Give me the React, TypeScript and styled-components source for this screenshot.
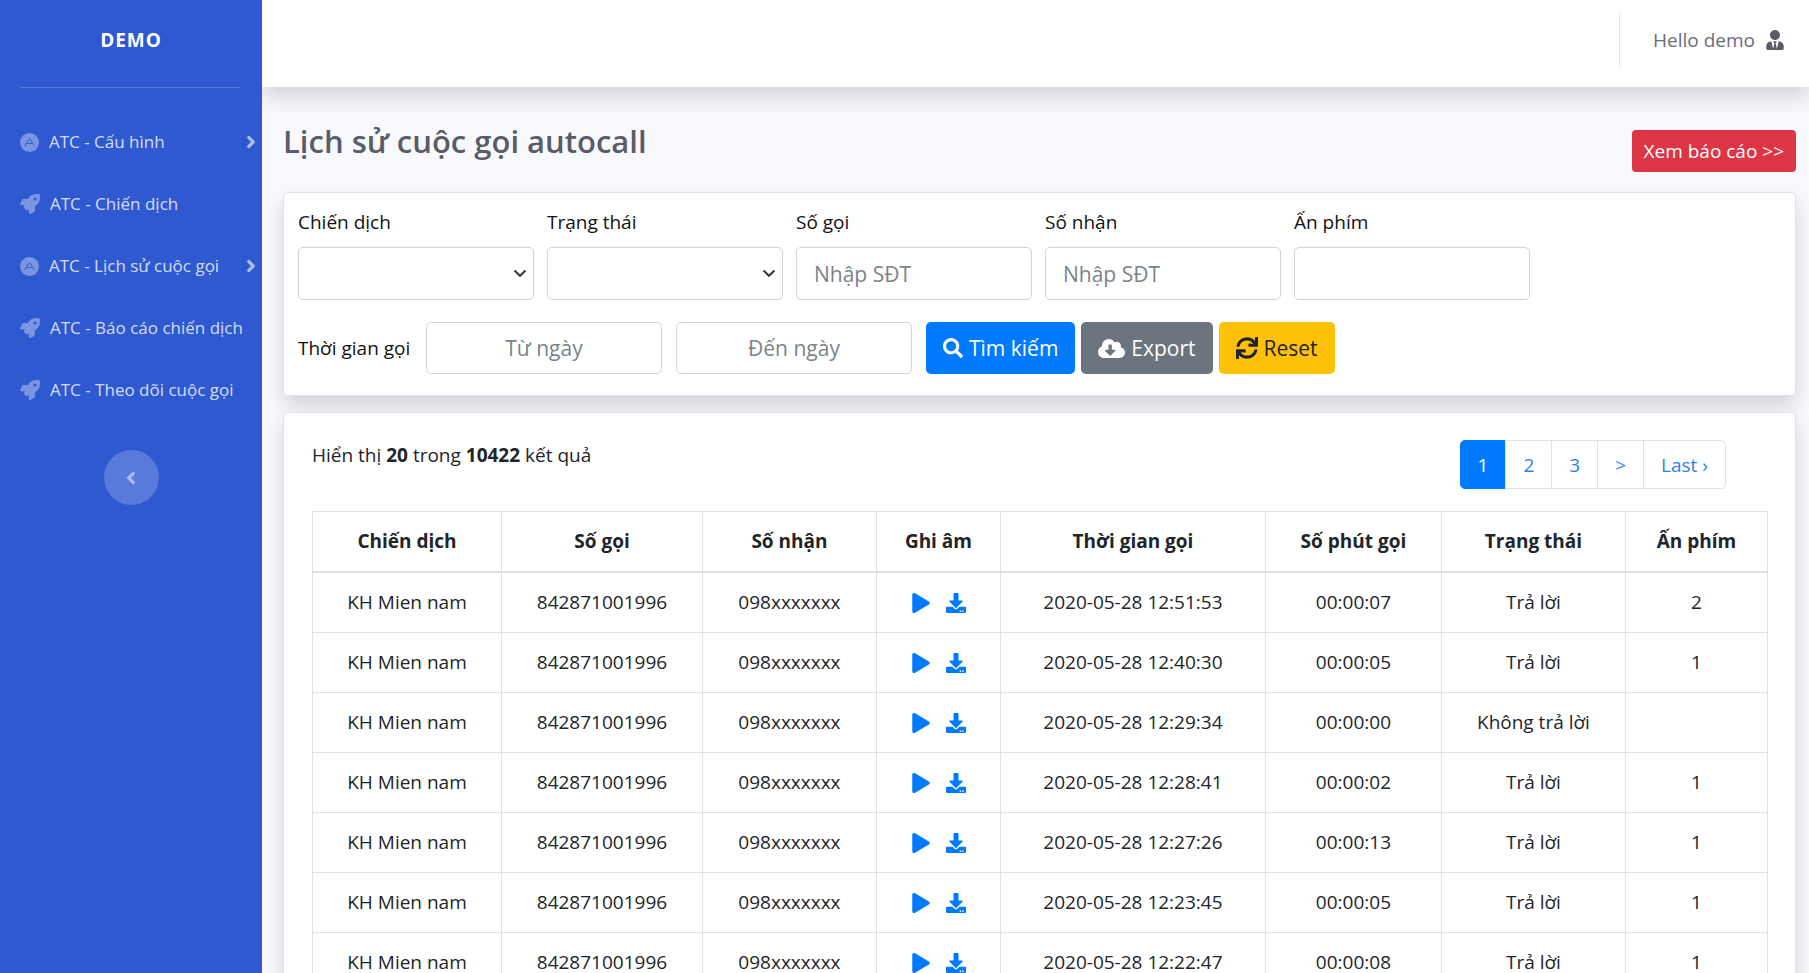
import React from 'react';
import styled, { createGlobalStyle, css } from 'styled-components';
import {
  FaRocket, FaAngleRight, FaAngleLeft, FaUserTie, FaSearch, FaCloudDownloadAlt, FaSync, FaPlay, FaDownload,
} from 'react-icons/fa';

const Global = createGlobalStyle`
  *, *::before, *::after { box-sizing: border-box; }
  html { scrollbar-width: none; }
  body {
    margin: 0;
    background: #f8f9fc;
    color: #212529;
    font-family: "Open Sans", "Noto Sans", sans-serif;
    font-size: 19px;
    line-height: 30px;
  }
  button, input, select { font: inherit; margin: 0; }
`;

const Shell = styled.div`
  display: flex;
  min-height: 100vh;
`;

const Sidebar = styled.nav`
  position: relative;
  z-index: 1;
  flex: 0 0 262px;
  background: #2f59d1;
  display: flex;
  flex-direction: column;
`;

const Brand = styled.a`
  height: 87px;
  padding-bottom: 7px;
  display: flex;
  align-items: center;
  justify-content: center;
  color: #fff;
  font-weight: 700;
  font-size: 19px;
  letter-spacing: 1px;
  text-decoration: none;
`;

const Divider = styled.hr`
  width: 220px;
  margin: 0 0 23px 20px;
  border: 0;
  border-top: 1px solid rgba(255, 255, 255, 0.18);
`;

const NavList = styled.ul`
  list-style: none;
  margin: 0;
  padding: 0;
`;

const NavLink = styled.a`
  display: flex;
  align-items: center;
  height: 62px;
  padding: 0 1px 0 20px;
  color: rgba(255, 255, 255, 0.8);
  font-size: 17px;
  text-decoration: none;
  white-space: nowrap;

  > svg { color: rgba(255, 255, 255, 0.36); flex: none; }
  > span { margin-left: 10px; flex: 1; }
  > span + svg { color: rgba(255, 255, 255, 0.6); }
`;

const Collapse = styled.button`
  align-self: center;
  width: 55px;
  height: 55px;
  padding: 0;
  margin-top: 29px;
  border: 0;
  border-radius: 50%;
  background: rgba(255, 255, 255, 0.2);
  color: rgba(255, 255, 255, 0.5);
  display: flex;
  align-items: center;
  justify-content: center;
`;

const Main = styled.main`
  flex: 1;
  min-width: 0;
`;

const Topbar = styled.header`
  height: 87px;
  padding: 0 24px 7px 0;
  background: #fff;
  box-shadow: 0 10px 20px rgba(0, 0, 0, 0.15);
  display: flex;
  align-items: center;
  justify-content: flex-end;
`;

const User = styled.a`
  height: 52px;
  padding-left: 33px;
  border-left: 1px solid #e3e6f0;
  display: flex;
  align-items: center;
  gap: 10px;
  color: #6b6d78;
  text-decoration: none;

  svg { color: #5a5c69; }
`;

const Content = styled.div`
  padding: 30px 13px 0 21px;
`;

const Heading = styled.div`
  display: flex;
  justify-content: space-between;
  align-items: flex-start;
  height: 75px;
`;

const Title = styled.h1`
  margin: 0;
  font-size: 31px;
  line-height: 48px;
  font-weight: 600;
  color: #5a5c69;
`;

const Report = styled.button`
  height: 42px;
  margin-top: 13px;
  padding: 0 12px;
  border: 0;
  border-radius: 4px;
  background: #dc3545;
  color: #fff;
  white-space: nowrap;
`;

const Card = styled.section`
  background: #fff;
  border: 1px solid #e0e1e6;
  border-radius: 5px;
  box-shadow: 0 10px 20px rgba(0, 0, 0, 0.15);
`;

const Filters = styled(Card)`
  padding: 14px 14px 21px;
  margin-bottom: 16px;
  color: #111;
`;

const FilterRow = styled.div`
  display: flex;
  gap: 13px;
  margin-bottom: 22px;
`;

const Field = styled.label`
  display: flex;
  flex-direction: column;
  gap: 10px;
  width: 236px;
`;

const control = css`
  width: 236px;
  height: 53px;
  border: 1px solid #ced4da;
  border-radius: 5px;
  background: #fff;
  color: #495057;
  font-size: 21px;
`;

const Input = styled.input`
  ${control}
  padding: 0 17px;
  &::placeholder { color: #7b838a; opacity: 1; }
`;

const DateInput = styled(Input)`
  height: 52px;
  text-align: center;
`;

const SelectBox = styled.span`
  position: relative;
  display: block;
  height: 53px;

  svg { position: absolute; right: 7px; top: 22px; pointer-events: none; }
`;

const Select = styled.select`
  ${control}
  appearance: none;
  padding: 0 30px 0 16px;
`;

const TimeRow = styled.div`
  display: flex;
  align-items: center;
  gap: 14px;
`;

const TimeLabel = styled.label`
  width: 114px;
  white-space: nowrap;
`;

const Actions = styled.div`
  display: flex;
  gap: 6px;
`;

const tones = {
  primary: ['#007bff', '#fff'],
  secondary: ['#6c757d', '#fff'],
  warning: ['#ffc107', '#212529'],
};

const Action = styled.button<{ $tone: keyof typeof tones }>`
  height: 52px;
  padding: 0 17px;
  border: 0;
  border-radius: 5px;
  background: ${(p) => tones[p.$tone][0]};
  color: ${(p) => tones[p.$tone][1]};
  font-size: 21px;
  display: flex;
  align-items: center;
  gap: 6px;
  white-space: nowrap;
`;

const Results = styled(Card)`
  padding: 27px 27px 27px 28px;
`;

const ResultsBar = styled.div`
  display: flex;
  justify-content: space-between;
  align-items: flex-start;
  height: 71px;
  padding-right: 42px;
`;

const Pages = styled.ul`
  list-style: none;
  margin: 0;
  padding: 0;
  display: flex;
`;

const Page = styled.a<{ $active?: boolean }>`
  display: block;
  height: 49px;
  padding: 9px 17px;
  margin-left: -1px;
  border: 1px solid ${(p) => (p.$active ? '#007bff' : '#dee2e6')};
  background: ${(p) => (p.$active ? '#007bff' : '#fff')};
  color: ${(p) => (p.$active ? '#fff' : '#2a82f0')};
  text-decoration: none;

  li:first-child > & { border-radius: 5px 0 0 5px; }
  li:last-child > & { border-radius: 0 5px 5px 0; }
`;

const Table = styled.table`
  width: 100%;
  table-layout: fixed;
  border-collapse: collapse;
  text-align: center;

  th, td { border: 1px solid #dee2e6; padding: 15px 0; height: 60px; line-height: 29px; white-space: nowrap; }
  th { font-weight: 700; border-bottom-width: 2px; }
`;

const Media = styled.span`
  display: flex;
  justify-content: center;
  gap: 15px;
`;

const MediaLink = styled.a`
  display: flex;
  align-items: center;
  height: 29px;
  color: #007bff;
`;

const nav = [
  { label: 'ATC - Cấu hình', group: true },
  { label: 'ATC - Chiến dịch' },
  { label: 'ATC - Lịch sử cuộc gọi', group: true },
  { label: 'ATC - Báo cáo chiến dịch' },
  { label: 'ATC - Theo dõi cuộc gọi' },
];

const columns: [string, number][] = [
  ['Chiến dịch', 189], ['Số gọi', 201], ['Số nhận', 174], ['Ghi âm', 124],
  ['Thời gian gọi', 265], ['Số phút gọi', 176], ['Trạng thái', 184], ['Ấn phím', 142],
];
const columnTotal = columns.reduce((sum, c) => sum + c[1], 0);

const calls = [
  ['12:51:53', '00:00:07', 'Trả lời', '2'],
  ['12:40:30', '00:00:05', 'Trả lời', '1'],
  ['12:29:34', '00:00:00', 'Không trả lời', ''],
  ['12:28:41', '00:00:02', 'Trả lời', '1'],
  ['12:27:26', '00:00:13', 'Trả lời', '1'],
  ['12:23:45', '00:00:05', 'Trả lời', '1'],
  ['12:22:47', '00:00:08', 'Trả lời', '1'],
];

const GroupIcon = () => (
  <svg width="19" height="19" viewBox="0 0 19 19" aria-hidden="true">
    <circle cx="9.5" cy="9.5" r="9.5" fill="currentColor" />
    <path d="M4.500 13 9.500 5.500 14.500 13M7 10.500h5" fill="none" stroke="#2f59d1" strokeWidth="1" />
  </svg>
);

const Caret = () => (
  <svg width="14" height="9" viewBox="0 0 14 9" aria-hidden="true">
    <path d="M1.500 1.500 7 6.800 12.500 1.500" fill="none" stroke="#343a40" strokeWidth="2" />
  </svg>
);

export default function App() {
  return (
    <Shell>
      <Global />
      <Sidebar>
        <Brand href="#">DEMO</Brand>
        <Divider />
        <NavList>
          {nav.map((item) => (
            <li key={item.label}>
              <NavLink href="#">
                {item.group ? <GroupIcon /> : <FaRocket size={20} />}
                <span>{item.label}</span>
                {item.group && <FaAngleRight size={20} />}
              </NavLink>
            </li>
          ))}
        </NavList>
        <Collapse aria-label="Thu gọn"><FaAngleLeft size={20} /></Collapse>
      </Sidebar>
      <Main>
        <Topbar>
          <User href="#">Hello demo <FaUserTie size={20} /></User>
        </Topbar>
        <Content>
          <Heading>
            <Title>Lịch sử cuộc gọi autocall</Title>
            <Report>Xem báo cáo &gt;&gt;</Report>
          </Heading>
          <Filters>
            <FilterRow>
              {['Chiến dịch', 'Trạng thái'].map((label) => (
                <Field key={label}>
                  {label}
                  <SelectBox><Select defaultValue=""><option value="" /></Select><Caret /></SelectBox>
                </Field>
              ))}
              <Field>Số gọi<Input placeholder="Nhập SĐT" /></Field>
              <Field>Số nhận<Input placeholder="Nhập SĐT" /></Field>
              <Field>Ấn phím<Input /></Field>
            </FilterRow>
            <TimeRow>
              <TimeLabel htmlFor="from">Thời gian gọi</TimeLabel>
              <DateInput id="from" placeholder="Từ ngày" />
              <DateInput aria-label="Đến ngày" placeholder="Đến ngày" />
              <Actions>
                <Action $tone="primary"><FaSearch size={20} />Tìm kiếm</Action>
                <Action $tone="secondary"><FaCloudDownloadAlt size={27} />Export</Action>
                <Action $tone="warning"><FaSync size={22} />Reset</Action>
              </Actions>
            </TimeRow>
          </Filters>
          <Results>
            <ResultsBar>
              <span>Hiển thị <b>20</b> trong <b>10422</b> kết quả</span>
              <Pages>
                {['1', '2', '3', '>', 'Last ›'].map((page, i) => (
                  <li key={page}><Page href="#" $active={i === 0}>{page}</Page></li>
                ))}
              </Pages>
            </ResultsBar>
            <Table>
              <colgroup>
                {columns.map(([name, share]) => (
                  <col key={name} style={{ width: `${(share / columnTotal) * 100}%` }} />
                ))}
              </colgroup>
              <thead>
                <tr>{columns.map(([name]) => <th key={name} scope="col">{name}</th>)}</tr>
              </thead>
              <tbody>
                {calls.map(([time, duration, status, key]) => (
                  <tr key={time}>
                    <td>KH Mien nam</td>
                    <td>842871001996</td>
                    <td>098xxxxxxx</td>
                    <td>
                      <Media>
                        <MediaLink href="#" aria-label="Nghe"><FaPlay size={20} /></MediaLink>
                        <MediaLink href="#" aria-label="Tải xuống"><FaDownload size={20} /></MediaLink>
                      </Media>
                    </td>
                    <td>2020-05-28 {time}</td>
                    <td>{duration}</td>
                    <td>{status}</td>
                    <td>{key}</td>
                  </tr>
                ))}
              </tbody>
            </Table>
          </Results>
        </Content>
      </Main>
    </Shell>
  );
}
